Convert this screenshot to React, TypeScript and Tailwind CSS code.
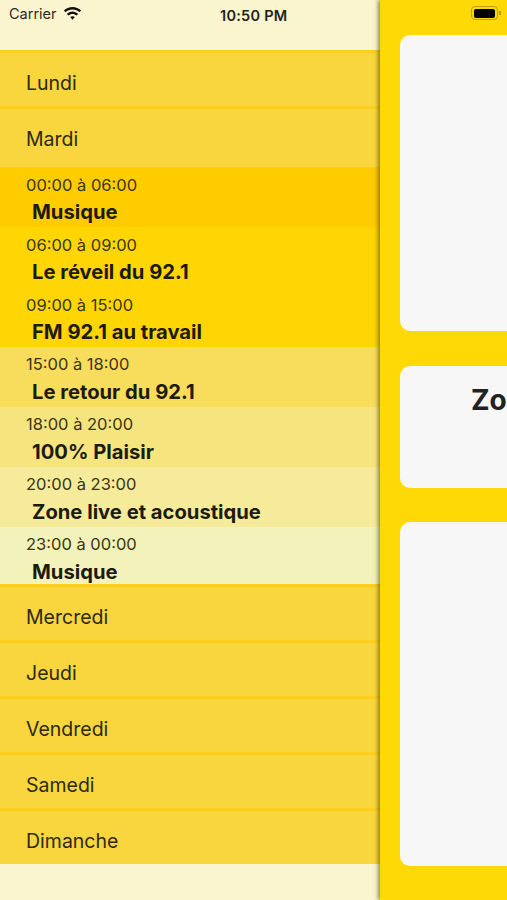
const days1 = ["Lundi"]
const days2 = ["Mercredi", "Jeudi", "Vendredi", "Samedi", "Dimanche"]

const programs = [
  { time: "00:00 à 06:00", title: "Musique", bg: "bg-[#ffcc00]", h: "h-[60px]" },
  { time: "06:00 à 09:00", title: "Le réveil du 92.1", bg: "bg-[#ffd503]", h: "h-[60px]" },
  { time: "09:00 à 15:00", title: "FM 92.1 au travail", bg: "bg-[#ffd503]", h: "h-[60px]" },
  { time: "15:00 à 18:00", title: "Le retour du 92.1", bg: "bg-[#f8dc5c]", h: "h-[60px]" },
  { time: "18:00 à 20:00", title: "100% Plaisir", bg: "bg-[#f6e47e]", h: "h-[60px]" },
  { time: "20:00 à 23:00", title: "Zone live et acoustique", bg: "bg-[#f5eb9a]", h: "h-[60px]" },
  { time: "23:00 à 00:00", title: "Musique", bg: "bg-[#f3f2ba]", h: "h-[57px]" },
]

function DayRow({ label, tall }: { label: string; tall?: boolean }) {
  return (
    <div className={`${tall ? "h-[61px] pb-[5px]" : "h-[56px]"} border-t-[3px] border-[#fbcf1c] bg-[#f9d53e] pl-[26px] flex items-center text-[19.5px] text-[#2c2a10]`}>
      <span className="relative top-[4px]">{label}</span>
    </div>
  )
}

function StatusBar() {
  return (
    <div className="absolute inset-x-0 top-0 h-[28px] z-10 text-[#2a2a22]">
      <div className="flex items-center h-full pl-[9px] gap-[6px] text-[14.5px]">
        <span>Carrier</span>
        <svg width="19" height="14" viewBox="0 0 19 14" fill="#111">
          <path d="M9.5 2.6c2.7 0 5.1 1 7 2.7l1.6-1.7C15.8 1.4 12.8 0 9.5 0S3.2 1.4.9 3.6l1.6 1.7c1.9-1.7 4.3-2.7 7-2.7z" />
          <path d="M9.5 7c1.5 0 2.9.6 4 1.6l1.7-1.7C13.7 5.4 11.7 4.5 9.5 4.5S5.3 5.4 3.8 6.9l1.7 1.7c1.1-1 2.5-1.6 4-1.6z" />
          <path d="M9.5 9.2c-.9 0-1.7.3-2.3.9l2.3 2.6 2.3-2.6c-.6-.6-1.4-.9-2.3-.9z" />
        </svg>
      </div>
      <span className="absolute left-[220px] top-[5px] text-[14.5px] font-semibold tracking-[0.25px] text-[#222]">10:50 PM</span>
      <div className="absolute left-[471px] top-[6px] flex items-center">
        <div className="w-[27px] h-[14px] rounded-[4px] border-[1.5px] border-[#b8a00a] flex items-center justify-center">
          <div className="w-[21px] h-[9px] rounded-[2px] bg-black"></div>
        </div>
        <div className="w-[1.5px] h-[4px] bg-[#b8a00a] ml-[1px]"></div>
      </div>
    </div>
  )
}

export default function App() {
  return (
    <div className="relative w-[507px] h-[900px] overflow-hidden flex bg-[#ffd906] font-['Inter',sans-serif]">
      <StatusBar />

      {/* schedule */}
      <div className="w-[380px] shrink-0 bg-[#faf4cf] pt-[50px]">
        {days1.map((d) => <DayRow key={d} label={d} />)}
        <DayRow label="Mardi" tall />
        {programs.map((p, i) => (
          <div key={i} className={`${p.h} ${p.bg} pl-[26px] overflow-hidden`}>
            <div className={`text-[16.5px] leading-[20px] text-[#3a3510] ${i > 2 ? "pt-[7px]" : "pt-[8px]"}`}>{p.time}</div>
            <div className={`text-[20.2px] leading-[26px] font-bold pl-[6px] text-[#1c1b10] whitespace-nowrap ${i > 2 ? "mt-[5px]" : "mt-[4px]"}`}>{p.title}</div>
          </div>
        ))}
        {days2.map((d) => <DayRow key={d} label={d} />)}
      </div>

      {/* now playing */}
      <div className="flex-1 min-w-0 shadow-[-2px_0_4px_rgba(60,50,0,0.55)] pl-[20px] pt-[35px] flex flex-col">
        <div className="w-[340px] h-[296px] rounded-l-[10px] bg-[#f7f7f7] shrink-0"></div>
        <div className="w-[340px] h-[122px] mt-[35px] rounded-l-[10px] bg-[#f7f7f7] shrink-0 pl-[71px] pt-[16px]">
          <span className="text-[28px] leading-[36px] font-bold text-[#222] whitespace-nowrap">Zone live et acoustique</span>
        </div>
        <div className="w-[340px] h-[344px] mt-[34px] rounded-l-[10px] bg-[#f7f7f7] shrink-0"></div>
      </div>
    </div>
  )
}
